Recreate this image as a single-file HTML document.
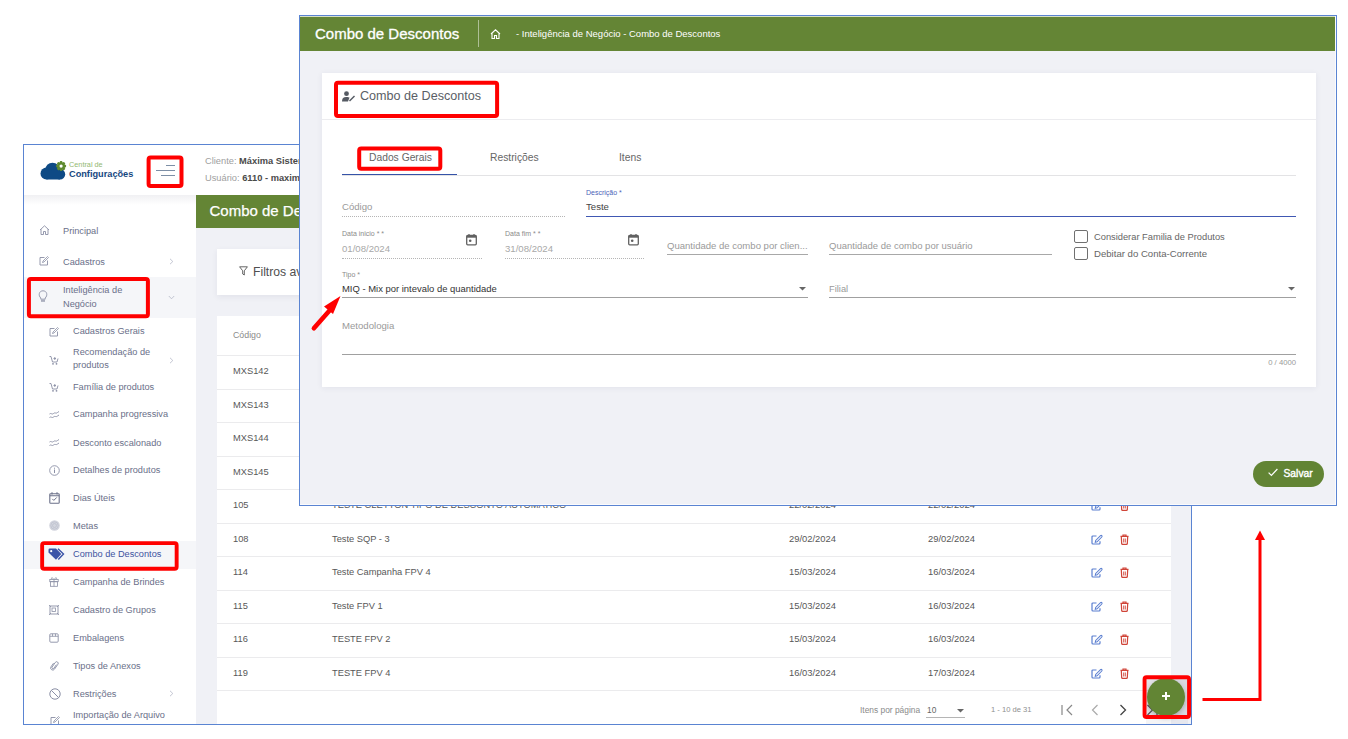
<!DOCTYPE html>
<html><head><meta charset="utf-8">
<style>
*{box-sizing:border-box;margin:0;padding:0}
html,body{width:1348px;height:739px;overflow:hidden;background:#fff}
body{position:relative;font-family:"Liberation Sans",sans-serif;color:#333}
.a{position:absolute;white-space:nowrap}
#back{position:absolute;left:23px;top:144px;width:1169px;height:581px;border:1px solid #5a84d2;overflow:hidden;background:#fff}
#backin{position:absolute;left:-24px;top:-145px;width:1348px;height:739px}
#front{position:absolute;left:299px;top:15px;width:1038px;height:491px;border:1px solid #5a84d2;overflow:hidden;background:#f0f1f6}
#frontin{position:absolute;left:-300px;top:-16px;width:1348px;height:739px}
svg.a{overflow:visible}
</style></head><body>

<div id="back"><div id="backin">
<div class="a" style="left:196px;top:195px;width:1000px;height:540px;background:#f0f1f6;"></div>
<div class="a" style="left:24px;top:195px;width:172px;height:540px;background:#fff;"></div>
<div class="a" style="left:24px;top:195px;width:172px;height:10px;background:linear-gradient(#f0f0f3,#fff);"></div>
<div class="a" style="left:196px;top:195px;width:1000px;height:33px;background:#648535;"></div>
<div class="a" style="left:209.5px;top:202.5px;font-size:15px;line-height:16px;color:#fff;font-weight:normal;-webkit-text-stroke:0.25px #fff">Combo de Descontos</div>
<svg class="a" style="left:36px;top:154px;" width="40" height="30" viewBox="0 0 40 30"><g fill="#0e4a85"><circle cx="16.5" cy="16" r="7.3"/><circle cx="10.5" cy="19.5" r="6"/><circle cx="24" cy="20.3" r="5.2"/><rect x="10.5" y="17" width="13.5" height="8.5"/></g><g transform="translate(25.1,12.1)" fill="#5f8a2f"><circle r="3.9"/><rect x="-1.3" y="-5" width="2.6" height="3" rx="0.8" transform="rotate(0)"/><rect x="-1.3" y="-5" width="2.6" height="3" rx="0.8" transform="rotate(45)"/><rect x="-1.3" y="-5" width="2.6" height="3" rx="0.8" transform="rotate(90)"/><rect x="-1.3" y="-5" width="2.6" height="3" rx="0.8" transform="rotate(135)"/><rect x="-1.3" y="-5" width="2.6" height="3" rx="0.8" transform="rotate(180)"/><rect x="-1.3" y="-5" width="2.6" height="3" rx="0.8" transform="rotate(225)"/><rect x="-1.3" y="-5" width="2.6" height="3" rx="0.8" transform="rotate(270)"/><rect x="-1.3" y="-5" width="2.6" height="3" rx="0.8" transform="rotate(315)"/><circle r="1.6" fill="#fff"/></g></svg>
<div class="a" style="left:69px;top:159.5px;font-size:7.3px;line-height:9px;color:#93b872;font-weight:normal;">Central de</div>
<div class="a" style="left:69px;top:168.5px;font-size:9.2px;line-height:11px;color:#16477f;font-weight:bold;">Configurações</div>
<div class="a" style="left:166px;top:165px;width:9px;height:1px;background:#7d8fa6;"></div>
<div class="a" style="left:156px;top:170px;width:19px;height:1px;background:#7d8fa6;"></div>
<div class="a" style="left:161px;top:175px;width:14px;height:1px;background:#7d8fa6;"></div>
<div class="a" style="left:205px;top:155px;font-size:9.3px;line-height:12px;color:#a0a0a0;font-weight:normal;">Cliente: <b style="color:#4a4a4a">Máxima Sistemas</b></div>
<div class="a" style="left:205px;top:172px;font-size:9.3px;line-height:12px;color:#a0a0a0;font-weight:normal;">Usuário: <b style="color:#4a4a4a">6110 - maxima</b></div>
<div class="a" style="left:24px;top:277px;width:172px;height:41px;background:#f5f6f9;"></div>
<div class="a" style="left:24px;top:541px;width:172px;height:28px;background:#f5f6f9;"></div>
<svg class="a" style="left:39px;top:225px;" width="11" height="10" viewBox="0 0 11 10"><path d="M1 5 L5.5 0.8 L10 5 M2 4.2 V9.5 H4.5 V6.5 H6.5 V9.5 H9 V4.2" fill="none" stroke="#8a8fa5" stroke-width="0.9"/></svg>
<div class="a" style="left:63px;top:224.6px;font-size:9.2px;line-height:12px;color:#6a6f89;font-weight:normal;">Principal</div>
<svg class="a" style="left:39px;top:256px;" width="10" height="10" viewBox="0 0 10 10"><path d="M5.5 1.5 H1 V9 H8.5 V4.5" fill="none" stroke="#8a8fa5" stroke-width="0.9"/><path d="M3.5 6.5 L4 5 L8.5 0.5 L9.5 1.5 L5 6 Z" fill="none" stroke="#8a8fa5" stroke-width="0.8"/></svg>
<div class="a" style="left:63px;top:255.6px;font-size:9.2px;line-height:12px;color:#6a6f89;font-weight:normal;">Cadastros</div>
<svg class="a" style="left:169px;top:258px;" width="5" height="7" viewBox="0 0 5 7"><path d="M1 0.8 L3.8 3.5 L1 6.2" fill="none" stroke="#b4b8c6" stroke-width="0.8"/></svg>
<svg class="a" style="left:38px;top:290px;" width="10" height="13" viewBox="0 0 10 13"><path d="M2.8 8 C0 5.5 1 0.8 5 0.8 C9 0.8 10 5.5 7.2 8 V9.2 H2.8 Z" fill="none" stroke="#8a8fa5" stroke-width="0.9"/><rect x="3" y="10.3" width="4" height="1.3" fill="#8a8fa5"/></svg>
<div class="a" style="left:63px;top:284.2px;font-size:9.2px;line-height:12px;color:#6a6f89;font-weight:normal;">Inteligência de</div>
<div class="a" style="left:63px;top:297.6px;font-size:9.2px;line-height:12px;color:#6a6f89;font-weight:normal;">Negócio</div>
<svg class="a" style="left:168px;top:295px;" width="7" height="5" viewBox="0 0 7 5"><path d="M0.8 1 L3.5 3.8 L6.2 1" fill="none" stroke="#b4b8c6" stroke-width="0.8"/></svg>
<div class="a" style="left:73px;top:324.8px;font-size:9.2px;line-height:12px;color:#6a6f89;font-weight:normal;">Cadastros Gerais</div>
<svg class="a" style="left:49px;top:327px;" width="10" height="10" viewBox="0 0 10 10"><path d="M5.5 1.5 H1 V9 H8.5 V4.5" fill="none" stroke="#8a8fa5" stroke-width="0.9"/><path d="M3.5 6.5 L4 5 L8.5 0.5 L9.5 1.5 L5 6 Z" fill="none" stroke="#8a8fa5" stroke-width="0.8"/></svg>
<div class="a" style="left:73px;top:346.3px;font-size:9.2px;line-height:12px;color:#6a6f89;font-weight:normal;">Recomendação de</div>
<svg class="a" style="left:49px;top:355px;" width="10" height="10" viewBox="0 0 10 10"><path d="M0.5 1.5 H2 L3.5 7 H8 L9 3.5 M4.5 3.5 H7 M5.8 2 V5" fill="none" stroke="#8a8fa5" stroke-width="0.9"/><circle cx="4" cy="8.8" r="0.9" fill="#8a8fa5"/><circle cx="7.5" cy="8.8" r="0.9" fill="#8a8fa5"/></svg>
<div class="a" style="left:73px;top:359.3px;font-size:9.2px;line-height:12px;color:#6a6f89;font-weight:normal;">produtos</div>
<div class="a" style="left:73px;top:380.8px;font-size:9.2px;line-height:12px;color:#6a6f89;font-weight:normal;">Família de produtos</div>
<svg class="a" style="left:49px;top:381.5px;" width="10" height="10" viewBox="0 0 10 10"><path d="M0.5 1.5 H2 L3.5 7 H8 L9 3.5 M4.5 3.5 H7 M5.8 2 V5" fill="none" stroke="#8a8fa5" stroke-width="0.9"/><circle cx="4" cy="8.8" r="0.9" fill="#8a8fa5"/><circle cx="7.5" cy="8.8" r="0.9" fill="#8a8fa5"/></svg>
<div class="a" style="left:73px;top:408.3px;font-size:9.2px;line-height:12px;color:#6a6f89;font-weight:normal;">Campanha progressiva</div>
<svg class="a" style="left:49px;top:410px;" width="11" height="9" viewBox="0 0 11 9"><path d="M0.5 4 C2 2.5 3 5 4.5 3.5 C6 2 7 4 8.5 2.5 L10 1.5 M0.5 7.5 C2 6 3 8.5 4.5 7 C6 5.5 7 7.5 8.5 6 L10 5" fill="none" stroke="#8a8fa5" stroke-width="0.9"/></svg>
<div class="a" style="left:73px;top:436.6px;font-size:9.2px;line-height:12px;color:#6a6f89;font-weight:normal;">Desconto escalonado</div>
<svg class="a" style="left:49px;top:438px;" width="11" height="9" viewBox="0 0 11 9"><path d="M0.5 4 C2 2.5 3 5 4.5 3.5 C6 2 7 4 8.5 2.5 L10 1.5 M0.5 7.5 C2 6 3 8.5 4.5 7 C6 5.5 7 7.5 8.5 6 L10 5" fill="none" stroke="#8a8fa5" stroke-width="0.9"/></svg>
<div class="a" style="left:73px;top:464.3px;font-size:9.2px;line-height:12px;color:#6a6f89;font-weight:normal;">Detalhes de produtos</div>
<svg class="a" style="left:49px;top:465px;" width="11" height="11" viewBox="0 0 11 11"><circle cx="5.5" cy="5.5" r="4.8" fill="none" stroke="#8a8fa5" stroke-width="0.9"/><rect x="5" y="4.5" width="1" height="3.5" fill="#8a8fa5"/><rect x="5" y="2.7" width="1" height="1" fill="#8a8fa5"/></svg>
<div class="a" style="left:73px;top:492.3px;font-size:9.2px;line-height:12px;color:#6a6f89;font-weight:normal;">Dias Úteis</div>
<svg class="a" style="left:49px;top:492px;" width="11" height="12" viewBox="0 0 11 12"><rect x="0.8" y="1.8" width="9.4" height="9.4" rx="0.8" fill="none" stroke="#6b7089" stroke-width="1.1"/><path d="M0.8 3.8 H10.2 M3 0.3 V2.5 M8 0.3 V2.5" stroke="#6b7089" stroke-width="1.1"/><path d="M3.3 6.9 L4.8 8.4 L7.8 5.4" fill="none" stroke="#6b7089" stroke-width="1"/></svg>
<div class="a" style="left:73px;top:520.3px;font-size:9.2px;line-height:12px;color:#6a6f89;font-weight:normal;">Metas</div>
<svg class="a" style="left:49px;top:520px;" width="11" height="11" viewBox="0 0 11 11"><circle cx="5.5" cy="5.5" r="5.3" fill="#d3d5de"/><circle cx="5.5" cy="5.5" r="3.7" fill="none" stroke="#bcc0cd" stroke-width="0.7"/><circle cx="5.5" cy="5.5" r="2" fill="none" stroke="#bcc0cd" stroke-width="0.7"/></svg>
<div class="a" style="left:73px;top:548.0px;font-size:9.2px;line-height:12px;color:#3d52a0;font-weight:normal;">Combo de Descontos</div>
<svg class="a" style="left:48px;top:547.5px;" width="17" height="13" viewBox="0 0 17 13"><path d="M0.5 1.8 Q0.5 0.5 1.8 0.5 H8 L13.3 6 L8 11.8 L0.5 4.5 Z" fill="#3b54a8"/><circle cx="3.2" cy="3.2" r="1.1" fill="#fff"/><path d="M10 0.8 L15.5 6 L10.3 11.5" fill="none" stroke="#3b54a8" stroke-width="1.4"/></svg>
<div class="a" style="left:73px;top:576.3px;font-size:9.2px;line-height:12px;color:#6a6f89;font-weight:normal;">Campanha de Brindes</div>
<svg class="a" style="left:49px;top:576px;" width="10" height="11" viewBox="0 0 10 11"><rect x="0.8" y="3.5" width="8.4" height="2.2" fill="none" stroke="#8a8fa5" stroke-width="0.8"/><rect x="1.5" y="5.7" width="7" height="4.6" fill="none" stroke="#8a8fa5" stroke-width="0.8"/><path d="M5 3.5 V10.3 M5 3.5 C3 0.5 1.5 2 3 3.4 M5 3.5 C7 0.5 8.5 2 7 3.4" fill="none" stroke="#8a8fa5" stroke-width="0.8"/></svg>
<div class="a" style="left:73px;top:604.0999999999999px;font-size:9.2px;line-height:12px;color:#6a6f89;font-weight:normal;">Cadastro de Grupos</div>
<svg class="a" style="left:49px;top:605px;" width="10" height="10" viewBox="0 0 10 10"><rect x="1" y="1" width="8" height="8" fill="none" stroke="#8a8fa5" stroke-width="0.9"/><rect x="3" y="3" width="3.5" height="3.5" fill="none" stroke="#8a8fa5" stroke-width="0.8"/><path d="M0 0 L2 2 M10 0 L8 2 M0 10 L2 8 M10 10 L8 8" stroke="#8a8fa5" stroke-width="0.8"/></svg>
<div class="a" style="left:73px;top:631.8px;font-size:9.2px;line-height:12px;color:#6a6f89;font-weight:normal;">Embalagens</div>
<svg class="a" style="left:49px;top:633px;" width="10" height="10" viewBox="0 0 10 10"><rect x="0.8" y="0.8" width="8.4" height="8.4" rx="1" fill="none" stroke="#8a8fa5" stroke-width="0.9"/><path d="M0.8 3.3 H9.2 M3.5 0.8 V3.3 M6.5 0.8 V3.3" stroke="#8a8fa5" stroke-width="0.8"/></svg>
<div class="a" style="left:73px;top:659.8px;font-size:9.2px;line-height:12px;color:#6a6f89;font-weight:normal;">Tipos de Anexos</div>
<svg class="a" style="left:49px;top:659.5px;" width="11" height="12" viewBox="0 0 11 12"><g transform="rotate(35 5.5 6)"><path d="M6.3 3.8 V8.2 A1.1 1.1 0 0 1 4.1 8.2 V2.6 A1.6 1.6 0 0 1 7.3 2.6 V8.6 A2.1 2.1 0 0 1 3.1 8.6 V4.2" fill="none" stroke="#8a8fa5" stroke-width="0.85"/></g></svg>
<div class="a" style="left:73px;top:687.8px;font-size:9.2px;line-height:12px;color:#6a6f89;font-weight:normal;">Restrições</div>
<svg class="a" style="left:49px;top:688px;" width="12" height="12" viewBox="0 0 12 12"><circle cx="6" cy="6" r="5.2" fill="none" stroke="#8a8fa5" stroke-width="1"/><path d="M2.4 2.4 L9.6 9.6" stroke="#8a8fa5" stroke-width="1"/></svg>
<div class="a" style="left:73px;top:708.8px;font-size:9.2px;line-height:12px;color:#6a6f89;font-weight:normal;">Importação de Arquivo</div>
<svg class="a" style="left:169px;top:357px;" width="5" height="7" viewBox="0 0 5 7"><path d="M1 0.8 L3.8 3.5 L1 6.2" fill="none" stroke="#b4b8c6" stroke-width="0.8"/></svg>
<svg class="a" style="left:169px;top:690px;" width="5" height="7" viewBox="0 0 5 7"><path d="M1 0.8 L3.8 3.5 L1 6.2" fill="none" stroke="#b4b8c6" stroke-width="0.8"/></svg>
<svg class="a" style="left:50px;top:716px;" width="10" height="10" viewBox="0 0 10 10"><path d="M5.5 1.5 H1 V9 H8.5 V4.5" fill="none" stroke="#8a8fa5" stroke-width="0.9"/><path d="M3.5 6.5 L4 5 L8.5 0.5 L9.5 1.5 L5 6 Z" fill="none" stroke="#8a8fa5" stroke-width="0.8"/></svg>
<div class="a" style="left:217px;top:249px;width:954px;height:46px;background:#fff;box-shadow:0 2px 6px rgba(40,40,80,.07)"></div>
<svg class="a" style="left:239px;top:266px;" width="9" height="10" viewBox="0 0 9 10"><path d="M0.6 0.8 H8.4 L5.3 4.8 V9 L3.7 8 V4.8 Z" fill="none" stroke="#555" stroke-width="0.9"/></svg>
<div class="a" style="left:253px;top:263.5px;font-size:12.2px;line-height:16px;color:#505050;font-weight:normal;">Filtros avançados</div>
<div class="a" style="left:217px;top:316px;width:954px;height:420px;background:#fff;"></div>
<div class="a" style="left:233px;top:329px;font-size:8.8px;line-height:12px;color:#8a8a8a;font-weight:normal;">Código</div>
<div class="a" style="left:217px;top:355px;width:954px;height:1px;background:#ebebed;"></div>
<div class="a" style="left:217px;top:389px;width:954px;height:1px;background:#ebebed;"></div>
<div class="a" style="left:217px;top:422px;width:954px;height:1px;background:#ebebed;"></div>
<div class="a" style="left:217px;top:456px;width:954px;height:1px;background:#ebebed;"></div>
<div class="a" style="left:217px;top:489px;width:954px;height:1px;background:#ebebed;"></div>
<div class="a" style="left:217px;top:523px;width:954px;height:1px;background:#ebebed;"></div>
<div class="a" style="left:217px;top:556px;width:954px;height:1px;background:#ebebed;"></div>
<div class="a" style="left:217px;top:590px;width:954px;height:1px;background:#ebebed;"></div>
<div class="a" style="left:217px;top:623px;width:954px;height:1px;background:#ebebed;"></div>
<div class="a" style="left:217px;top:657px;width:954px;height:1px;background:#ebebed;"></div>
<div class="a" style="left:217px;top:690px;width:954px;height:1px;background:#ebebed;"></div>
<div class="a" style="left:233px;top:364.8px;font-size:9.3px;line-height:12px;color:#585858;font-weight:normal;">MXS142</div>
<div class="a" style="left:233px;top:398.8px;font-size:9.3px;line-height:12px;color:#585858;font-weight:normal;">MXS143</div>
<div class="a" style="left:233px;top:431.8px;font-size:9.3px;line-height:12px;color:#585858;font-weight:normal;">MXS144</div>
<div class="a" style="left:233px;top:465.8px;font-size:9.3px;line-height:12px;color:#585858;font-weight:normal;">MXS145</div>
<div class="a" style="left:233px;top:498.8px;font-size:9.3px;line-height:12px;color:#585858;font-weight:normal;">105</div>
<div class="a" style="left:332px;top:498.8px;font-size:9.3px;line-height:12px;color:#585858;font-weight:normal;">TESTE CLEYTON TIPO DE DESCONTO AUTOMATICO</div>
<div class="a" style="left:789px;top:498.8px;font-size:9.4px;line-height:12px;color:#585858;font-weight:normal;">22/02/2024</div>
<div class="a" style="left:928px;top:498.8px;font-size:9.4px;line-height:12px;color:#585858;font-weight:normal;">22/02/2024</div>
<svg class="a" style="left:1090.6px;top:501.4px;" width="12" height="10" viewBox="0 0 12 10"><path d="M5.5 1 H1.9 Q1 1 1 1.9 V8.1 Q1 9 1.9 9 H8.1 Q9 9 9 8.1 V6.2" fill="none" stroke="#5b7fd0" stroke-width="1.2"/><path d="M4.3 7.2 L4.7 5.4 L9.5 0.7 Q10.2 0.1 10.8 0.7 Q11.4 1.4 10.8 2 L6.1 6.8 Z" fill="none" stroke="#5b7fd0" stroke-width="1.05"/></svg>
<svg class="a" style="left:1120px;top:499.6px;" width="9" height="11" viewBox="0 0 9 11"><path d="M0.5 2.4 H8.5 M3 2.4 V1 H6 V2.4" fill="none" stroke="#d04438" stroke-width="1.2"/><path d="M1.3 2.6 L1.7 9.7 Q1.8 10.4 2.5 10.4 H6.5 Q7.2 10.4 7.3 9.7 L7.7 2.6" fill="none" stroke="#d04438" stroke-width="1.2"/><path d="M3.7 4.5 V8.5 M5.3 4.5 V8.5" stroke="#d04438" stroke-width="0.9"/></svg>
<div class="a" style="left:233px;top:532.8px;font-size:9.3px;line-height:12px;color:#585858;font-weight:normal;">108</div>
<div class="a" style="left:332px;top:532.8px;font-size:9.3px;line-height:12px;color:#585858;font-weight:normal;">Teste SQP - 3</div>
<div class="a" style="left:789px;top:532.8px;font-size:9.4px;line-height:12px;color:#585858;font-weight:normal;">29/02/2024</div>
<div class="a" style="left:928px;top:532.8px;font-size:9.4px;line-height:12px;color:#585858;font-weight:normal;">29/02/2024</div>
<svg class="a" style="left:1090.6px;top:535.4px;" width="12" height="10" viewBox="0 0 12 10"><path d="M5.5 1 H1.9 Q1 1 1 1.9 V8.1 Q1 9 1.9 9 H8.1 Q9 9 9 8.1 V6.2" fill="none" stroke="#5b7fd0" stroke-width="1.2"/><path d="M4.3 7.2 L4.7 5.4 L9.5 0.7 Q10.2 0.1 10.8 0.7 Q11.4 1.4 10.8 2 L6.1 6.8 Z" fill="none" stroke="#5b7fd0" stroke-width="1.05"/></svg>
<svg class="a" style="left:1120px;top:533.6px;" width="9" height="11" viewBox="0 0 9 11"><path d="M0.5 2.4 H8.5 M3 2.4 V1 H6 V2.4" fill="none" stroke="#d04438" stroke-width="1.2"/><path d="M1.3 2.6 L1.7 9.7 Q1.8 10.4 2.5 10.4 H6.5 Q7.2 10.4 7.3 9.7 L7.7 2.6" fill="none" stroke="#d04438" stroke-width="1.2"/><path d="M3.7 4.5 V8.5 M5.3 4.5 V8.5" stroke="#d04438" stroke-width="0.9"/></svg>
<div class="a" style="left:233px;top:565.8px;font-size:9.3px;line-height:12px;color:#585858;font-weight:normal;">114</div>
<div class="a" style="left:332px;top:565.8px;font-size:9.3px;line-height:12px;color:#585858;font-weight:normal;">Teste Campanha FPV 4</div>
<div class="a" style="left:789px;top:565.8px;font-size:9.4px;line-height:12px;color:#585858;font-weight:normal;">15/03/2024</div>
<div class="a" style="left:928px;top:565.8px;font-size:9.4px;line-height:12px;color:#585858;font-weight:normal;">16/03/2024</div>
<svg class="a" style="left:1090.6px;top:568.4px;" width="12" height="10" viewBox="0 0 12 10"><path d="M5.5 1 H1.9 Q1 1 1 1.9 V8.1 Q1 9 1.9 9 H8.1 Q9 9 9 8.1 V6.2" fill="none" stroke="#5b7fd0" stroke-width="1.2"/><path d="M4.3 7.2 L4.7 5.4 L9.5 0.7 Q10.2 0.1 10.8 0.7 Q11.4 1.4 10.8 2 L6.1 6.8 Z" fill="none" stroke="#5b7fd0" stroke-width="1.05"/></svg>
<svg class="a" style="left:1120px;top:566.6px;" width="9" height="11" viewBox="0 0 9 11"><path d="M0.5 2.4 H8.5 M3 2.4 V1 H6 V2.4" fill="none" stroke="#d04438" stroke-width="1.2"/><path d="M1.3 2.6 L1.7 9.7 Q1.8 10.4 2.5 10.4 H6.5 Q7.2 10.4 7.3 9.7 L7.7 2.6" fill="none" stroke="#d04438" stroke-width="1.2"/><path d="M3.7 4.5 V8.5 M5.3 4.5 V8.5" stroke="#d04438" stroke-width="0.9"/></svg>
<div class="a" style="left:233px;top:599.8px;font-size:9.3px;line-height:12px;color:#585858;font-weight:normal;">115</div>
<div class="a" style="left:332px;top:599.8px;font-size:9.3px;line-height:12px;color:#585858;font-weight:normal;">Teste FPV 1</div>
<div class="a" style="left:789px;top:599.8px;font-size:9.4px;line-height:12px;color:#585858;font-weight:normal;">15/03/2024</div>
<div class="a" style="left:928px;top:599.8px;font-size:9.4px;line-height:12px;color:#585858;font-weight:normal;">16/03/2024</div>
<svg class="a" style="left:1090.6px;top:602.4px;" width="12" height="10" viewBox="0 0 12 10"><path d="M5.5 1 H1.9 Q1 1 1 1.9 V8.1 Q1 9 1.9 9 H8.1 Q9 9 9 8.1 V6.2" fill="none" stroke="#5b7fd0" stroke-width="1.2"/><path d="M4.3 7.2 L4.7 5.4 L9.5 0.7 Q10.2 0.1 10.8 0.7 Q11.4 1.4 10.8 2 L6.1 6.8 Z" fill="none" stroke="#5b7fd0" stroke-width="1.05"/></svg>
<svg class="a" style="left:1120px;top:600.6px;" width="9" height="11" viewBox="0 0 9 11"><path d="M0.5 2.4 H8.5 M3 2.4 V1 H6 V2.4" fill="none" stroke="#d04438" stroke-width="1.2"/><path d="M1.3 2.6 L1.7 9.7 Q1.8 10.4 2.5 10.4 H6.5 Q7.2 10.4 7.3 9.7 L7.7 2.6" fill="none" stroke="#d04438" stroke-width="1.2"/><path d="M3.7 4.5 V8.5 M5.3 4.5 V8.5" stroke="#d04438" stroke-width="0.9"/></svg>
<div class="a" style="left:233px;top:632.8px;font-size:9.3px;line-height:12px;color:#585858;font-weight:normal;">116</div>
<div class="a" style="left:332px;top:632.8px;font-size:9.3px;line-height:12px;color:#585858;font-weight:normal;">TESTE FPV 2</div>
<div class="a" style="left:789px;top:632.8px;font-size:9.4px;line-height:12px;color:#585858;font-weight:normal;">15/03/2024</div>
<div class="a" style="left:928px;top:632.8px;font-size:9.4px;line-height:12px;color:#585858;font-weight:normal;">16/03/2024</div>
<svg class="a" style="left:1090.6px;top:635.4px;" width="12" height="10" viewBox="0 0 12 10"><path d="M5.5 1 H1.9 Q1 1 1 1.9 V8.1 Q1 9 1.9 9 H8.1 Q9 9 9 8.1 V6.2" fill="none" stroke="#5b7fd0" stroke-width="1.2"/><path d="M4.3 7.2 L4.7 5.4 L9.5 0.7 Q10.2 0.1 10.8 0.7 Q11.4 1.4 10.8 2 L6.1 6.8 Z" fill="none" stroke="#5b7fd0" stroke-width="1.05"/></svg>
<svg class="a" style="left:1120px;top:633.6px;" width="9" height="11" viewBox="0 0 9 11"><path d="M0.5 2.4 H8.5 M3 2.4 V1 H6 V2.4" fill="none" stroke="#d04438" stroke-width="1.2"/><path d="M1.3 2.6 L1.7 9.7 Q1.8 10.4 2.5 10.4 H6.5 Q7.2 10.4 7.3 9.7 L7.7 2.6" fill="none" stroke="#d04438" stroke-width="1.2"/><path d="M3.7 4.5 V8.5 M5.3 4.5 V8.5" stroke="#d04438" stroke-width="0.9"/></svg>
<div class="a" style="left:233px;top:666.8px;font-size:9.3px;line-height:12px;color:#585858;font-weight:normal;">119</div>
<div class="a" style="left:332px;top:666.8px;font-size:9.3px;line-height:12px;color:#585858;font-weight:normal;">TESTE FPV 4</div>
<div class="a" style="left:789px;top:666.8px;font-size:9.4px;line-height:12px;color:#585858;font-weight:normal;">16/03/2024</div>
<div class="a" style="left:928px;top:666.8px;font-size:9.4px;line-height:12px;color:#585858;font-weight:normal;">17/03/2024</div>
<svg class="a" style="left:1090.6px;top:669.4px;" width="12" height="10" viewBox="0 0 12 10"><path d="M5.5 1 H1.9 Q1 1 1 1.9 V8.1 Q1 9 1.9 9 H8.1 Q9 9 9 8.1 V6.2" fill="none" stroke="#5b7fd0" stroke-width="1.2"/><path d="M4.3 7.2 L4.7 5.4 L9.5 0.7 Q10.2 0.1 10.8 0.7 Q11.4 1.4 10.8 2 L6.1 6.8 Z" fill="none" stroke="#5b7fd0" stroke-width="1.05"/></svg>
<svg class="a" style="left:1120px;top:667.6px;" width="9" height="11" viewBox="0 0 9 11"><path d="M0.5 2.4 H8.5 M3 2.4 V1 H6 V2.4" fill="none" stroke="#d04438" stroke-width="1.2"/><path d="M1.3 2.6 L1.7 9.7 Q1.8 10.4 2.5 10.4 H6.5 Q7.2 10.4 7.3 9.7 L7.7 2.6" fill="none" stroke="#d04438" stroke-width="1.2"/><path d="M3.7 4.5 V8.5 M5.3 4.5 V8.5" stroke="#d04438" stroke-width="0.9"/></svg>
<div class="a" style="left:860px;top:705px;font-size:8.4px;line-height:10px;color:#8a8a8a;font-weight:normal;">Itens por página</div>
<div class="a" style="left:927px;top:705px;font-size:8.4px;line-height:10px;color:#666;font-weight:normal;">10</div>
<div class="a" style="left:926px;top:717px;width:39px;height:1px;background:#b5b5b5;"></div>
<svg class="a" style="left:957px;top:709px;" width="7" height="4" viewBox="0 0 7 4"><path d="M0 0 H7 L3.5 3.5 Z" fill="#666"/></svg>
<div class="a" style="left:991px;top:705px;font-size:7.6px;line-height:10px;color:#8f8f8f;font-weight:normal;">1 - 10 de 31</div>
<svg class="a" style="left:1061px;top:704px;" width="13" height="12" viewBox="0 0 13 12"><path d="M1 1 V11 M11 1 L6 6 L11 11" fill="none" stroke="#888" stroke-width="1.2"/></svg>
<svg class="a" style="left:1091px;top:704px;" width="8" height="12" viewBox="0 0 8 12"><path d="M6.5 1 L1.5 6 L6.5 11" fill="none" stroke="#aaa" stroke-width="1.2"/></svg>
<svg class="a" style="left:1119px;top:704px;" width="8" height="12" viewBox="0 0 8 12"><path d="M1.5 1 L6.5 6 L1.5 11" fill="none" stroke="#444" stroke-width="1.3"/></svg>
<svg class="a" style="left:1146px;top:704px;" width="14" height="12" viewBox="0 0 14 12"><path d="M1.5 1 L6.5 6 L1.5 11 M11 1 V11" fill="none" stroke="#444" stroke-width="1.3"/></svg>
<div class="a" style="left:1146px;top:679px;width:42px;height:38px;background:rgba(150,152,165,.26);"></div>
<div class="a" style="left:1146px;top:717px;width:42px;height:7px;background:rgba(150,152,165,.1);"></div>
<div class="a" style="left:1147px;top:678px;width:38px;height:38px;border-radius:50%;background:#628534;box-shadow:0 2px 5px rgba(0,0,0,.25)"></div>
<div class="a" style="left:1162px;top:695.3px;width:8px;height:1.3px;background:#fff;"></div>
<div class="a" style="left:1165.4px;top:691.6px;width:1.3px;height:8px;background:#fff;"></div>
</div></div>
<div id="front"><div id="frontin">
<div class="a" style="left:300px;top:16px;width:1040px;height:1px;background:#d6dfc6;"></div>
<div class="a" style="left:300px;top:17px;width:1040px;height:34px;background:#648535;"></div>
<div class="a" style="left:315px;top:24.5px;font-size:15px;line-height:17px;color:#fff;font-weight:normal;-webkit-text-stroke:0.3px #fff">Combo de Descontos</div>
<div class="a" style="left:478px;top:20px;width:1px;height:27px;background:#aebf96;"></div>
<svg class="a" style="left:490px;top:29px;" width="11" height="10" viewBox="0 0 11 10"><path d="M1 5 L5.5 0.8 L10 5 M2 4.2 V9.5 H4.5 V6.5 H6.5 V9.5 H9 V4.2" fill="none" stroke="#fff" stroke-width="1.1"/></svg>
<div class="a" style="left:516px;top:28px;font-size:9.5px;line-height:11px;color:#fff;font-weight:normal;">- Inteligência de Negócio - Combo de Descontos</div>
<div class="a" style="left:322px;top:73px;width:994px;height:314px;background:#fff;box-shadow:0 1px 6px rgba(40,40,80,.07)"></div>
<div class="a" style="left:322px;top:119px;width:994px;height:1px;background:#ececef;"></div>
<svg class="a" style="left:342px;top:91px;" width="14" height="11" viewBox="0 0 14 11"><circle cx="4.5" cy="2.7" r="2.4" fill="#555a63"/><path d="M0 10.5 C0 6.5 2.5 6 4.5 6 C6 6 7 6.3 7.5 6.6 L6 10.5 Z" fill="#555a63"/><path d="M7.5 10 L12.5 5" stroke="#555a63" stroke-width="1.4"/></svg>
<div class="a" style="left:360px;top:88.5px;font-size:12.6px;line-height:15px;color:#5a5e66;font-weight:normal;">Combo de Descontos</div>
<div class="a" style="left:369px;top:152px;font-size:10.3px;line-height:12px;color:#666;font-weight:normal;">Dados Gerais</div>
<div class="a" style="left:490px;top:152px;font-size:10.3px;line-height:12px;color:#666;font-weight:normal;">Restrições</div>
<div class="a" style="left:619px;top:152px;font-size:10.3px;line-height:12px;color:#666;font-weight:normal;">Itens</div>
<div class="a" style="left:342px;top:175px;width:954px;height:1px;background:#e3e3e5;"></div>
<div class="a" style="left:342px;top:173.8px;width:115px;height:1.3px;background:#3553a8;"></div>
<div class="a" style="left:342px;top:201px;font-size:9.6px;line-height:12px;color:#9a9a9a;font-weight:normal;">Código</div>
<div class="a" style="left:342px;top:216px;width:223px;height:0;border-top:1px dotted #b5b5b5"></div>
<div class="a" style="left:586px;top:189.3px;font-size:7px;line-height:8px;color:#4a63b8;font-weight:normal;">Descrição *</div>
<div class="a" style="left:586px;top:201px;font-size:9.6px;line-height:12px;color:#444;font-weight:normal;">Teste</div>
<div class="a" style="left:586px;top:215.6px;width:710px;height:1.7px;background:#4058b3;"></div>
<div class="a" style="left:342px;top:230.3px;font-size:7px;line-height:8px;color:#8a8a8a;font-weight:normal;">Data inicio * *</div>
<div class="a" style="left:342px;top:243px;font-size:9.6px;line-height:12px;color:#a8a8a8;font-weight:normal;">01/08/2024</div>
<div class="a" style="left:342px;top:258px;width:140px;height:0;border-top:1px dotted #b5b5b5"></div>
<div class="a" style="left:505px;top:230.3px;font-size:7px;line-height:8px;color:#8a8a8a;font-weight:normal;">Data fim * *</div>
<div class="a" style="left:505px;top:243px;font-size:9.6px;line-height:12px;color:#a8a8a8;font-weight:normal;">31/08/2024</div>
<div class="a" style="left:505px;top:258px;width:139px;height:0;border-top:1px dotted #b5b5b5"></div>
<svg class="a" style="left:466px;top:234px;" width="11" height="12" viewBox="0 0 11 12"><rect x="0.7" y="1.5" width="9.6" height="9.3" rx="1" fill="none" stroke="#616161" stroke-width="1.3"/><rect x="0.7" y="1.5" width="9.6" height="2.2" fill="#616161"/><path d="M3 0 V2 M8 0 V2" stroke="#616161" stroke-width="1.2"/><circle cx="4.2" cy="6.7" r="1.3" fill="#616161"/></svg>
<svg class="a" style="left:628px;top:234px;" width="11" height="12" viewBox="0 0 11 12"><rect x="0.7" y="1.5" width="9.6" height="9.3" rx="1" fill="none" stroke="#616161" stroke-width="1.3"/><rect x="0.7" y="1.5" width="9.6" height="2.2" fill="#616161"/><path d="M3 0 V2 M8 0 V2" stroke="#616161" stroke-width="1.2"/><circle cx="4.2" cy="6.7" r="1.3" fill="#616161"/></svg>
<div class="a" style="left:667px;top:239.5px;font-size:9.55px;line-height:12px;color:#9a9a9a;font-weight:normal;">Quantidade de combo por clien...</div>
<div class="a" style="left:667px;top:253.5px;width:141px;height:1px;background:#a8a8a8;"></div>
<div class="a" style="left:829px;top:239.5px;font-size:9.5px;line-height:12px;color:#9a9a9a;font-weight:normal;">Quantidade de combo por usuário</div>
<div class="a" style="left:829px;top:253.5px;width:223px;height:1px;background:#a8a8a8;"></div>
<div class="a" style="left:1074px;top:230px;width:13.5px;height:13px;border:1.7px solid #707070;border-radius:2px"></div>
<div class="a" style="left:1074px;top:247.3px;width:13.5px;height:13px;border:1.7px solid #707070;border-radius:2px"></div>
<div class="a" style="left:1094px;top:230.5px;font-size:9.3px;line-height:12px;color:#666;font-weight:normal;">Considerar Familia de Produtos</div>
<div class="a" style="left:1094px;top:247.5px;font-size:9.6px;line-height:12px;color:#666;font-weight:normal;">Debitar do Conta-Corrente</div>
<div class="a" style="left:342px;top:270.8px;font-size:7px;line-height:8px;color:#8a8a8a;font-weight:normal;">Tipo *</div>
<div class="a" style="left:342px;top:282.5px;font-size:9.45px;line-height:12px;color:#333;font-weight:normal;">MIQ - Mix por intevalo de quantidade</div>
<div class="a" style="left:342px;top:297px;width:466px;height:1px;background:#a0a0a0;"></div>
<svg class="a" style="left:798.5px;top:286.5px;" width="7" height="4" viewBox="0 0 7 4"><path d="M0 0 H7 L3.5 3.5 Z" fill="#666"/></svg>
<div class="a" style="left:829px;top:282.5px;font-size:9.3px;line-height:12px;color:#9a9a9a;font-weight:normal;">Filial</div>
<div class="a" style="left:829px;top:297px;width:467px;height:1px;background:#a0a0a0;"></div>
<svg class="a" style="left:1287.5px;top:286.5px;" width="7" height="4" viewBox="0 0 7 4"><path d="M0 0 H7 L3.5 3.5 Z" fill="#666"/></svg>
<div class="a" style="left:342px;top:319.5px;font-size:9.6px;line-height:12px;color:#9a9a9a;font-weight:normal;">Metodologia</div>
<div class="a" style="left:342px;top:354px;width:954px;height:1px;background:#a0a0a0;"></div>
<div class="a" style="left:1246px;top:358.5px;width:50px;text-align:right;font-size:7.7px;line-height:8px;color:#9a9a9a">0 / 4000</div>
<div class="a" style="left:1253px;top:461px;width:71px;height:26px;background:#628434;border-radius:13px"></div>
<svg class="a" style="left:1268px;top:467.5px;" width="10" height="8.5" viewBox="0 0 10 8.5"><path d="M0.6 4.6 L3.4 7.4 L9.4 1" fill="none" stroke="#fff" stroke-width="1.2"/></svg>
<div class="a" style="left:1283.5px;top:467.6px;font-size:10.3px;line-height:12px;color:#fff;font-weight:normal;-webkit-text-stroke:0.4px #fff">Salvar</div>
<div class="a" style="left:300px;top:504px;width:1036px;height:1px;background:#fbfbfd;"></div>
<div class="a" style="left:1335px;top:16px;width:1px;height:489px;background:#fbfbfd;"></div>
</div></div>
<svg class="a" style="left:0;top:0" width="1348" height="739" viewBox="0 0 1348 739">
<rect x="148.6" y="157.6" width="32.900000000000006" height="28.30000000000001" rx="2" fill="none" stroke="#ff0000" stroke-width="4"/>
<rect x="28.9" y="279.1" width="119.0" height="37.19999999999999" rx="2" fill="none" stroke="#ff0000" stroke-width="4"/>
<rect x="42.150000000000006" y="543.1500000000001" width="134.49999999999997" height="25.6" rx="2" fill="none" stroke="#ff0000" stroke-width="3.9"/>
<rect x="1144.55" y="677.25" width="44.50000000000009" height="39.80000000000005" rx="2" fill="none" stroke="#ff0000" stroke-width="3.9"/>
<rect x="336.0" y="82.8" width="161.10000000000002" height="33.10000000000001" rx="2" fill="none" stroke="#ff0000" stroke-width="4"/>
<rect x="359.2" y="148.6" width="81.10000000000002" height="20.099999999999994" rx="2" fill="none" stroke="#ff0000" stroke-width="4"/>
<line x1="313.9" y1="328.2" x2="330" y2="310" stroke="#ff0000" stroke-width="4.6" stroke-linecap="round"/>
<path d="M340.5 296 L324 306.5 L333 314 Z" fill="#ff0000"/>
<path d="M1202.5 699.5 H1260 V539" fill="none" stroke="#ff0000" stroke-width="3"/>
<path d="M1255 540 L1260 530.5 L1265 540 Z" fill="#ff0000"/>
</svg>
</body></html>
